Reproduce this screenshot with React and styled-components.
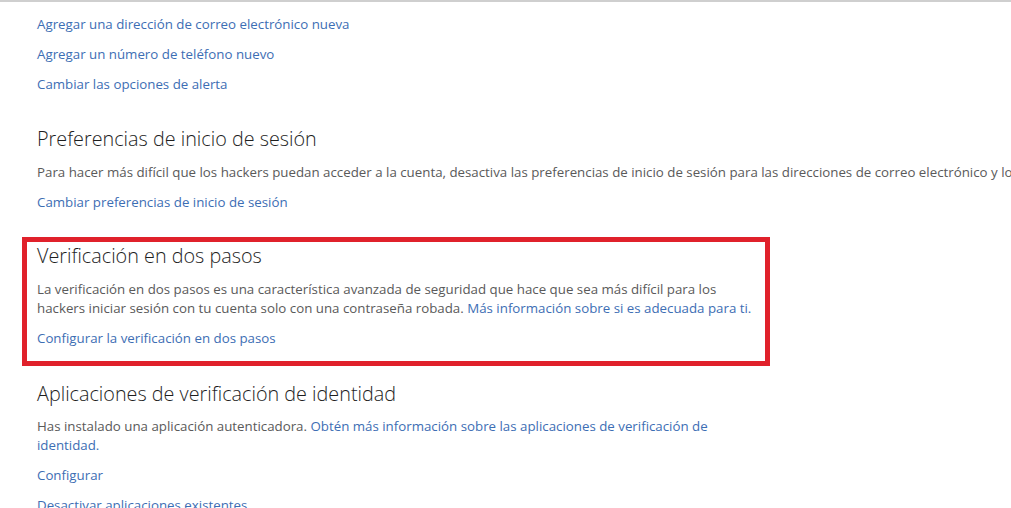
import React from "react";
import styled, { createGlobalStyle } from "styled-components";

const Global = createGlobalStyle`
  html, body { margin: 0; padding: 0; background: #fff; }
  body { overflow: hidden; font-family: "Open Sans", "Noto Sans", sans-serif; }
`;

const Page = styled.div`
  width: 1011px;
  height: 508px;
  overflow: hidden;
  border-top: 2px solid #cfcfcf;
  box-sizing: border-box;
  padding: 12.5px 0 0 37px;
`;

const Section = styled.section`
  margin-top: ${(p) => p.$top || 0}px;
`;

const Boxed = styled.section`
  margin-top: ${(p) => p.$top || 0}px;
  margin-left: -15px;
  width: 748px;
  box-sizing: border-box;
  border: 5px solid #e0212b;
  padding: 0 0 13px 10px;
`;

const Heading = styled.h2`
  margin: 0;
  font-size: 19.8px;
  font-weight: 300;
  line-height: 28px;
  color: #1e1e1e;
  white-space: nowrap;
`;

const Para = styled.p`
  margin: 9.5px 0 0;
  font-size: 13.3px;
  line-height: 19px;
  color: #5a5a5a;
  max-width: ${(p) => (p.$nowrap ? "none" : "722px")};
  white-space: ${(p) => (p.$nowrap ? "nowrap" : "normal")};
`;

const Link = styled.a`
  color: #3d6eb4;
  text-decoration: none;
  cursor: pointer;
`;

const LinkRow = styled.div`
  margin-top: ${(p) => (p.$first ? 0 : 11)}px;
  font-size: 13.3px;
  line-height: 19px;
  white-space: nowrap;
`;

export default function App() {
  return (
    <>
      <Global />
      <Page>
        <Section>
          <LinkRow $first>
            <Link>Agregar una dirección de correo electrónico nueva</Link>
          </LinkRow>
          <LinkRow>
            <Link>Agregar un número de teléfono nuevo</Link>
          </LinkRow>
          <LinkRow>
            <Link>Cambiar las opciones de alerta</Link>
          </LinkRow>
        </Section>

        <Section $top={31.5}>
          <Heading>Preferencias de inicio de sesión</Heading>
          <Para $nowrap>
            Para hacer más difícil que los hackers puedan acceder a la cuenta,
            desactiva las preferencias de inicio de sesión para las direcciones
            de correo electrónico y los números de teléfono que no uses.
          </Para>
          <LinkRow>
            <Link>Cambiar preferencias de inicio de sesión</Link>
          </LinkRow>
        </Section>

        <Boxed $top={25.5}>
          <Heading>Verificación en dos pasos</Heading>
          <Para>
            La verificación en dos pasos es una característica avanzada de
            seguridad que hace que sea más difícil para los hackers iniciar
            sesión con tu cuenta solo con una contraseña robada.{" "}
            <Link>Más información sobre si es adecuada para ti.</Link>
          </Para>
          <LinkRow>
            <Link>Configurar la verificación en dos pasos</Link>
          </LinkRow>
        </Boxed>

        <Section $top={14}>
          <Heading>Aplicaciones de verificación de identidad</Heading>
          <Para>
            Has instalado una aplicación autenticadora.{" "}
            <Link>
              Obtén más información sobre las aplicaciones de verificación de
              identidad.
            </Link>
          </Para>
          <LinkRow>
            <Link>Configurar</Link>
          </LinkRow>
          <LinkRow>
            <Link>Desactivar aplicaciones existentes</Link>
          </LinkRow>
        </Section>
      </Page>
    </>
  );
}
